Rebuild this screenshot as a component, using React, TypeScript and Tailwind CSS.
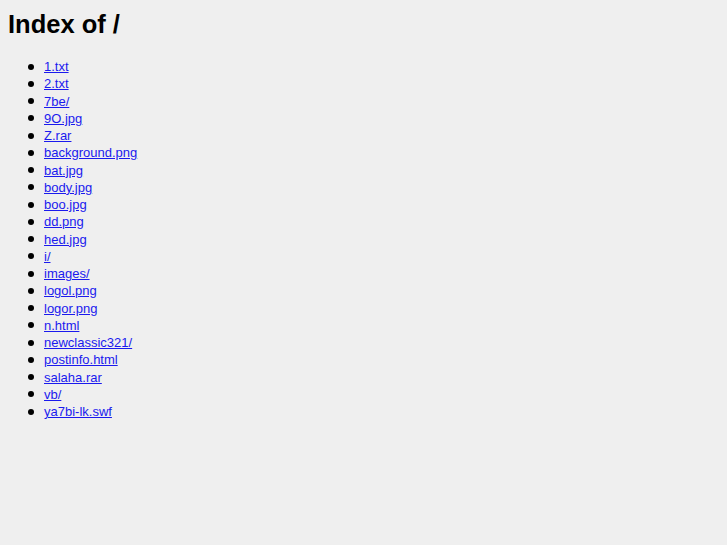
export default function App() {
  const items = [
    "1.txt","2.txt","7be/","9O.jpg","Z.rar","background.png","bat.jpg","body.jpg","boo.jpg","dd.png","hed.jpg","i/","images/","logol.png","logor.png","n.html","newclassic321/","postinfo.html","salaha.rar","vb/","ya7bi-lk.swf",
  ];
  return (
    <div className="min-h-[545px] bg-[#efefef] px-2 pt-[10px] text-black" style={{ fontFamily: '"Liberation Sans", Arial, sans-serif' }}>
      <h1 className="text-[25.5px] leading-[28px] font-bold">Index of /</h1>
      <ul className="mt-[20px] list-none pl-[20px] text-[13px] leading-[17.25px]">
        {items.map((it) => (
          <li key={it} className="flex items-center">
            <span className="mr-[10px] h-[6px] w-[6px] shrink-0 rounded-full bg-black" />
            <a href="#" className="text-[#1a1aee] underline">{it}</a>
          </li>
        ))}
      </ul>
    </div>
  );
}
